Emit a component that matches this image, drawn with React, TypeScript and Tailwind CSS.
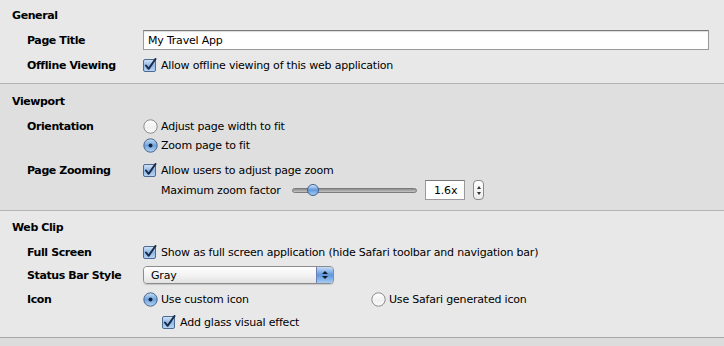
import React from 'react';

const Check = () => (
  <svg width="14" height="14" viewBox="0 0 14 14" className="shrink-0">
    <defs>
      <linearGradient id="cbg" x1="0" y1="0" x2="0" y2="1">
        <stop offset="0" stopColor="#d6e6f7" />
        <stop offset="0.5" stopColor="#8fb8e6" />
        <stop offset="1" stopColor="#b9d6f4" />
      </linearGradient>
    </defs>
    <rect x="0.5" y="1.5" width="12" height="12" rx="1.5" fill="url(#cbg)" stroke="#4d6a92" />
    <path d="M3 7.5 L5.6 10.8 L12.5 1" fill="none" stroke="#1b2c4a" strokeWidth="2" strokeLinecap="round" strokeLinejoin="round" />
  </svg>
);

const Radio = ({ on }: { on?: boolean }) => (
  <svg width="15" height="15" viewBox="0 0 15 15" className="shrink-0">
    <defs>
      <linearGradient id="rOn" x1="0" y1="0" x2="0" y2="1">
        <stop offset="0" stopColor="#c9def5" />
        <stop offset="0.5" stopColor="#6fa3dd" />
        <stop offset="1" stopColor="#b4d3f3" />
      </linearGradient>
      <linearGradient id="rOff" x1="0" y1="0" x2="0" y2="1">
        <stop offset="0" stopColor="#ffffff" />
        <stop offset="0.6" stopColor="#f0f0f0" />
        <stop offset="1" stopColor="#fbfbfb" />
      </linearGradient>
    </defs>
    <circle cx="7.5" cy="7.5" r="6.7" fill={on ? 'url(#rOn)' : 'url(#rOff)'} stroke={on ? '#4a6790' : '#8a8a8a'} />
    {on && <circle cx="7.5" cy="7.5" r="2" fill="#14223a" />}
  </svg>
);

const Label = ({ children }: { children: React.ReactNode }) => (
  <div className="w-[116px] shrink-0 font-bold tracking-[-0.4px] pt-[1px]">{children}</div>
);

export default function App() {
  return (
    <div
      className="w-[724px] h-[346px] bg-[#dcdcdc] text-[11px] tracking-[-0.2px] text-black leading-4 overflow-hidden"
      style={{ fontFamily: '"DejaVu Sans", Verdana, sans-serif' }}
    >
      {/* General */}
      <div className="bg-[#e8e8e8] border-b border-[#b4b4b4] pl-[12px] pt-[7px] pb-[10px]">
        <div className="h-4 font-bold tracking-[-0.4px] pt-[1px]">General</div>
        <div className="pl-[15px] mt-[7px] h-[20px] flex items-center">
          <Label>Page Title</Label>
          <div className="w-[566px] h-[20px] bg-white border border-[#9a9a9a] border-t-[#7a7a7a] flex items-center pl-[4px] pt-[1px] shadow-[inset_0_1px_1px_rgba(0,0,0,0.15)]">
            My Travel App
          </div>
        </div>
        <div className="pl-[15px] mt-[7px] h-4 flex items-center">
          <Label>Offline Viewing</Label>
          <div className="flex items-center gap-[4px]">
            <Check />
            <span className="pt-[1px]">Allow offline viewing of this web application</span>
          </div>
        </div>
      </div>

      {/* Viewport */}
      <div className="bg-[#dfdfdf] border-b border-[#b4b4b4] pl-[12px] pt-[9px] pb-[10px]">
        <div className="h-4 font-bold tracking-[-0.4px] pt-[1px]">Viewport</div>
        <div className="pl-[15px] mt-[9px] h-4 flex items-center">
          <Label>Orientation</Label>
          <div className="flex items-center gap-[3px]">
            <Radio />
            <span className="pt-[1px]">Adjust page width to fit</span>
          </div>
        </div>
        <div className="pl-[131px] mt-[3px] h-4 flex items-center gap-[3px]">
          <Radio on />
          <span className="pt-[1px]">Zoom page to fit</span>
        </div>
        <div className="pl-[15px] mt-[9px] h-4 flex items-center">
          <Label>Page Zooming</Label>
          <div className="flex items-center gap-[4px]">
            <Check />
            <span className="pt-[1px]">Allow users to adjust page zoom</span>
          </div>
        </div>
        <div className="pl-[149px] mt-[2px] h-[20px] flex items-center">
          <span className="w-[131px] pt-[1px]">Maximum zoom factor</span>
          <div className="relative w-[125px] h-[14px] flex items-center">
            <div className="w-full h-[5px] rounded-full bg-gradient-to-b from-[#8d8d8d] via-[#a9a9a9] to-[#c4c4c4] border border-[#7c7c7c]" />
            <div className="absolute left-[15px] top-[1px] w-[12px] h-[12px] rounded-full border border-[#3f5f8c] bg-gradient-to-b from-[#d4e6fa] via-[#5f98dc] to-[#a7cdf5]" />
          </div>
          <div className="ml-[8px] w-[40px] h-[20px] bg-white border border-[#9a9a9a] border-t-[#7a7a7a] flex items-center pl-[8px] pt-[1px]">
            1.6x
          </div>
          <div className="ml-[8px] w-[11px] h-[20px] rounded-[4px] border border-[#8a8a8a] bg-gradient-to-b from-white to-[#ececec] flex flex-col items-center justify-center gap-[3px]">
            <div className="w-0 h-0 border-l-[2.5px] border-r-[2.5px] border-b-[3px] border-l-transparent border-r-transparent border-b-[#333]" />
            <div className="w-0 h-0 border-l-[2.5px] border-r-[2.5px] border-t-[3px] border-l-transparent border-r-transparent border-t-[#333]" />
          </div>
        </div>
      </div>

      {/* Web Clip */}
      <div className="bg-[#e8e8e8] border-b border-[#a8a8a8] pl-[12px] pt-[8px] pb-[7px]">
        <div className="h-4 font-bold tracking-[-0.4px] pt-[1px]">Web Clip</div>
        <div className="pl-[15px] mt-[9px] h-4 flex items-center">
          <Label>Full Screen</Label>
          <div className="flex items-center gap-[4px]">
            <Check />
            <span className="pt-[1px]">Show as full screen application (hide Safari toolbar and navigation bar)</span>
          </div>
        </div>
        <div className="pl-[15px] mt-[6px] h-[18px] flex items-center">
          <Label>Status Bar Style</Label>
          <div className="w-[191px] h-[18px] rounded-[4px] border border-[#8c8c8c] flex overflow-hidden shadow-[0_1px_1px_rgba(0,0,0,0.15)]">
            <div className="flex-1 bg-gradient-to-b from-white via-[#f3f3f3] to-[#e2e2e2] pl-[7px] pt-[1px] flex items-center">Gray</div>
            <div className="w-[17px] border-l border-[#6d7fb5] bg-gradient-to-b from-[#c7dcf5] via-[#5e96dc] to-[#a6cbf3] flex flex-col items-center justify-center gap-[2px]">
              <div className="w-0 h-0 border-l-[3px] border-r-[3px] border-b-[3px] border-l-transparent border-r-transparent border-b-[#10182a]" />
              <div className="w-0 h-0 border-l-[3px] border-r-[3px] border-t-[3px] border-l-transparent border-r-transparent border-t-[#10182a]" />
            </div>
          </div>
        </div>
        <div className="pl-[15px] mt-[7px] h-4 flex items-center">
          <Label>Icon</Label>
          <div className="w-[228px] flex items-center gap-[3px]">
            <Radio on />
            <span className="pt-[1px]">Use custom icon</span>
          </div>
          <div className="flex items-center gap-[3px]">
            <Radio />
            <span className="pt-[1px]">Use Safari generated icon</span>
          </div>
        </div>
        <div className="pl-[150px] mt-[7px] h-4 flex items-center gap-[4px]">
          <Check />
          <span className="pt-[1px]">Add glass visual effect</span>
        </div>
      </div>
    </div>
  );
}
